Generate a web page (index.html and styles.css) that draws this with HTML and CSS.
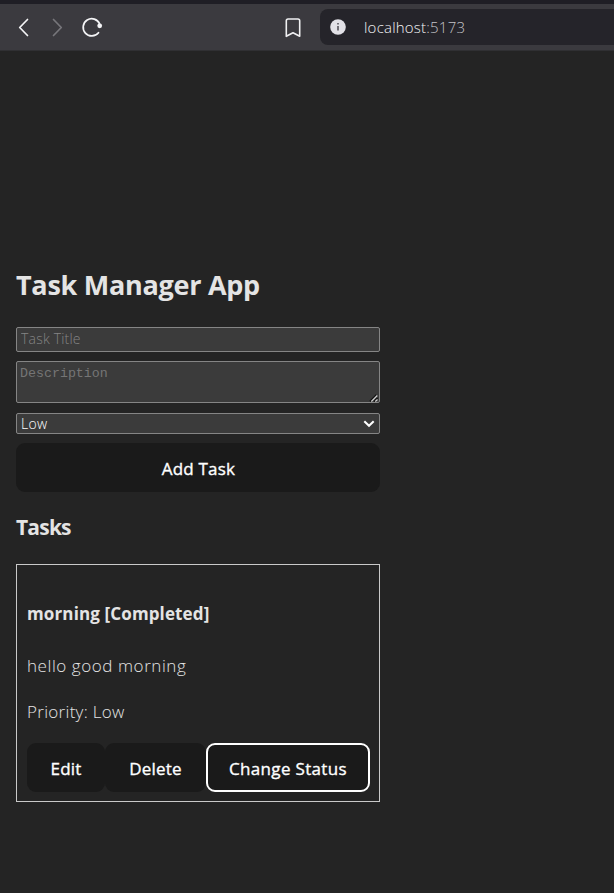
FILE: index.html
```html
<!DOCTYPE html>
<html lang="en">
<head>
<meta charset="utf-8">
<title>Task Manager App</title>
<link rel="stylesheet" href="styles.css">
</head>
<body>
<header class="toolbar">
  <svg class="nav-icons" width="120" height="46" viewBox="0 0 120 46" fill="none" stroke-linecap="round" stroke-linejoin="round">
    <path d="M27.5 14.5 19.7 22.5 27.5 30.5" stroke="#f4f4f6" stroke-width="1.7"/>
    <path d="M53.5 14.5 61.3 22.5 53.5 30.5" stroke="#77767b" stroke-width="1.7"/>
    <path d="M98.5 27.7A8.6 8.6 0 1 1 99.7 19" stroke="#f4f4f6" stroke-width="1.7"/>
    <circle cx="99.7" cy="20.8" r="2.4" fill="#f4f4f6"/>
  </svg>
  <svg class="bookmark" width="16" height="20" viewBox="0 0 16 20" fill="none" stroke="#f0f0f2" stroke-width="1.6" stroke-linejoin="round">
    <path d="M1.3 2.8Q1.3 1 3.1 1H12.9Q14.7 1 14.7 2.8V18.3L8 14.7 1.3 18.3Z"/>
  </svg>
  <div class="address">
    <svg width="16" height="16" viewBox="0 0 16 16">
      <circle cx="8" cy="8" r="7.8" fill="#e2e1e7"/>
      <path d="M8 7V11.5M8 4V5.5" stroke="#55545b" stroke-width="1.6"/>
    </svg>
    <div class="url">localhost<span class="port">:5173</span></div>
  </div>
</header>
<main class="app">
  <h1 class="app-title"><span>Task Manager App</span></h1>
  <form class="task-form">
    <input class="field title-field" placeholder="Task Title">
    <div class="description-wrap">
      <textarea class="field description-field" placeholder="Description"></textarea>
      <svg class="grip" width="9" height="8" viewBox="0 0 9 8" fill="none">
        <path d="M1 7.5 7.5 1M5 7.5 8.5 4" stroke="#141414" stroke-width="1.8"/>
        <path d="M2.3 7.5 8.3 1.5M6.3 7.5 8.5 5.5" stroke="#d0d0d0" stroke-width="1.2"/>
      </svg>
    </div>
    <div class="field priority-field">
      <span>Low</span>
      <svg width="12" height="8" viewBox="0 0 12 8" fill="none" stroke="#fff" stroke-width="2.1"><path d="M1.3 1.3 6 5.7 10.7 1.3"/></svg>
    </div>
    <button class="button add" type="button">Add Task</button>
  </form>
  <h2 class="section-title">Tasks</h2>
  <article class="card">
    <h3 class="task-title">morning [Completed]</h3>
    <p class="description">hello good morning</p>
    <p class="priority">Priority: Low</p>
    <div class="actions">
      <button class="button edit" type="button">Edit</button>
      <button class="button delete" type="button">Delete</button>
      <button class="button status" type="button">Change Status</button>
    </div>
  </article>
</main>
</body>
</html>
```
FILE: styles.css
```css
* { box-sizing: border-box; }
html { background: #242424; }
body {
  margin: 0;
  height: 893px;
  overflow: hidden;
  background: #242424;
  color: #e4e4e4;
  font-family: "Open Sans", "Noto Sans", sans-serif;
}
.toolbar {
  display: flex;
  align-items: center;
  height: 51px;
  padding-bottom: 1px;
  border-top: 4px solid #1f1e25;
  border-bottom: 1px solid #303033;
  background: #3b3a3f;
}
.nav-icons { margin-top: 2px; }
.bookmark { margin: 2px 0 0 165px; }
.address {
  display: flex;
  align-items: center;
  flex: 1;
  height: 36px;
  margin-left: 19px;
  padding-left: 10px;
  border-radius: 8px 0 0 8px;
  background: #25242a;
}
.url {
  margin-left: 18px;
  color: #f4f4f6;
  font-size: 15px;
  font-weight: 300;
  letter-spacing: 0.22px;
  line-height: 20px;
  white-space: nowrap;
}
.port { color: #c4c3c8; }
.app { width: 396px; padding: 214px 16px 0; }
.app-title {
  height: 40px;
  margin: 0;
  font-size: 27px;
  font-weight: 700;
  letter-spacing: -0.27px;
  line-height: 40px;
  white-space: nowrap;
}
.task-form { display: flex; flex-direction: column; margin-top: 22px; }
.field {
  width: 100%;
  border: 1px solid #858585;
  border-radius: 2px;
  outline: none;
  background: #3b3b3b;
  color: #fff;
  font-family: "Open Sans", sans-serif;
  font-size: 14px;
  font-weight: 300;
}
.field::placeholder { color: #858585; opacity: 1; }
.title-field { height: 25px; padding: 0 4px 2px; letter-spacing: 0.2px; }
.description-wrap { position: relative; height: 42px; margin: 9px 0 10px; }
.description-field {
  display: block;
  height: 42px;
  padding: 3px;
  resize: none;
  font-family: "Liberation Mono", monospace;
  font-size: 13.3px;
  line-height: 17px;
}
.description-field::placeholder { color: #757575; }
.grip { position: absolute; right: 2px; bottom: 1px; }
.priority-field {
  display: flex;
  align-items: center;
  justify-content: space-between;
  height: 21px;
  padding: 0 4px;
  letter-spacing: 0.3px;
}
.button {
  height: 49px;
  padding: 2px 0 0;
  border: 0;
  border-radius: 9px;
  background: #1a1a1a;
  color: #fff;
  font-family: "Open Sans", sans-serif;
  font-size: 17px;
  font-weight: 500;
  letter-spacing: 0.2px;
  line-height: 26px;
  white-space: nowrap;
  -webkit-text-stroke: 0.35px #fff;
}
.add { margin-top: 9px; padding-left: 1px; }
.section-title {
  margin: 20px 0 0;
  font-size: 21px;
  font-weight: 700;
  letter-spacing: -0.8px;
  line-height: 31px;
}
.card {
  height: 238px;
  margin-top: 21px;
  padding: 36px 9px 9px 10px;
  border: 1px solid #c9c9c9;
}
.task-title { margin: 0; font-size: 17px; font-weight: 700; letter-spacing: 0.13px; line-height: 26px; }
.description, .priority { margin: 0; font-size: 17px; font-weight: 300; line-height: 26px; }
.description { margin-top: 26px; letter-spacing: 0.57px; }
.priority { margin-top: 20px; letter-spacing: 0.3px; }
.actions { display: flex; margin-top: 18px; }
.edit { width: 78px; }
.delete { width: 101px; }
.status { width: 164px; border: 2px solid #fff; letter-spacing: 0.33px; }
```
